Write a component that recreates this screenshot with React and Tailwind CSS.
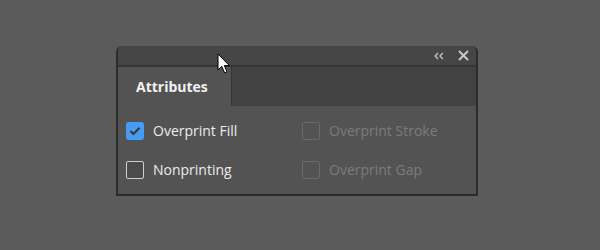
import React from "react";

function Check({ checked, disabled }) {
  if (checked) {
    return (
      <div className="w-[18px] h-[18px] rounded-[3px] bg-[#469cf3] flex items-center justify-center shrink-0">
        <svg width="12" height="10" viewBox="0 0 12 10">
          <path d="M1.5 5 L4.5 8 L10.5 1.8" fill="none" stroke="#3a3a3a" strokeWidth="2.2" />
        </svg>
      </div>
    );
  }
  return (
    <div
      className={
        disabled
          ? "w-[18px] h-[18px] rounded-[2px] border-[1.5px] border-[#6a6a6a] shrink-0"
          : "w-[18px] h-[18px] rounded-[2px] border-[1.5px] border-[#cfcfcf] bg-[#4b4b4b] shrink-0"
      }
    />
  );
}

function Item({ label, checked, disabled }) {
  return (
    <div className="flex items-center gap-[9px] h-[18px]">
      <Check checked={checked} disabled={disabled} />
      <span
        className={
          disabled
            ? "text-[14px] text-[#7c7c7c] leading-none"
            : "text-[14px] text-[#ececec] leading-none"
        }
      >
        {label}
      </span>
    </div>
  );
}

export default function App() {
  return (
    <div
      className="relative w-[600px] h-[250px] bg-[#5b5b5b] pl-[116px] pt-[46px]"
      style={{ fontFamily: '"Open Sans", "Noto Sans", sans-serif' }}
    >
      <div className="w-[362px] h-[150px] rounded-t-[6px] bg-[#535353] border-x-2 border-b-2 border-[#2c2c2c] flex flex-col overflow-hidden">
        {/* title bar */}
        <div className="h-[19px] bg-[#464646] flex items-center justify-end pr-[7px] gap-[14px] shrink-0">
          <svg width="10" height="8" viewBox="0 0 10 8">
            <path d="M4 1 L1.2 4 L4 7 M8.8 1 L6 4 L8.8 7" fill="none" stroke="#c4c4c4" strokeWidth="1.4" />
          </svg>
          <svg width="11" height="11" viewBox="0 0 11 11">
            <path d="M1 1 L10 10 M10 1 L1 10" fill="none" stroke="#cbcbcb" strokeWidth="1.9" />
          </svg>
        </div>
        <div className="h-[2px] bg-[#353535] shrink-0" />
        {/* tab strip */}
        <div className="h-[39px] bg-[#424242] flex shrink-0">
          <div className="w-[114px] bg-[#535353] border-r border-[#353535] flex items-center pl-[18px]">
            <span className="text-[14px] font-bold text-[#f2f2f2] leading-none">Attributes</span>
          </div>
        </div>
        {/* body */}
        <div className="flex-1 grid grid-cols-[176px_1fr] gap-y-[21px] content-start pt-[16px] pl-[8px]">
          <Item label="Overprint Fill" checked />
          <Item label="Overprint Stroke" disabled />
          <Item label="Nonprinting" />
          <Item label="Overprint Gap" disabled />
        </div>
      </div>
      {/* cursor */}
      <svg className="absolute left-[217px] top-[53px]" width="14" height="22" viewBox="0 0 14 22">
        <path
          d="M1 1 L1 17 L4.8 13.4 L7.6 19.8 L10 18.8 L7.3 12.6 L12.4 12.6 Z"
          fill="#ffffff"
          stroke="#000000"
          strokeWidth="1"
          strokeLinejoin="miter"
        />
      </svg>
    </div>
  );
}
